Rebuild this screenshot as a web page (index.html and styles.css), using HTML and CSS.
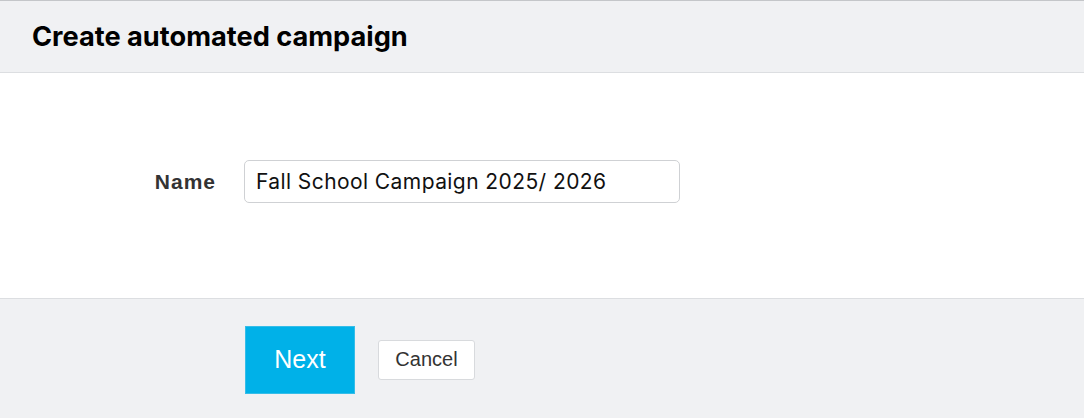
FILE: index.html
```html
<!DOCTYPE html>
<html>
<head>
<meta charset="utf-8">
<link rel="stylesheet" href="styles.css">
</head>
<body>
<div class="page">
  <header class="header">
    <h1 class="title">Create automated campaign</h1>
  </header>
  <main class="body">
    <div class="row">
      <label class="label" for="name">Name</label>
      <input class="input" id="name" type="text" value="Fall School Campaign 2025/ 2026">
    </div>
  </main>
  <footer class="footer">
    <button class="btn-next">Next</button>
    <button class="btn-cancel">Cancel</button>
  </footer>
</div>
</body>
</html>
```
FILE: styles.css
```css
* { box-sizing: border-box; }
html, body { margin: 0; padding: 0; }
body { width: 1084px; height: 418px; overflow: hidden; background: #f0f1f3; }
.page { display: flex; flex-direction: column; height: 418px; border-top: 1px solid #c4c6c9; }
.header {
  height: 72px;
  background: #f0f1f3;
  border-bottom: 1px solid #dcdee1;
  display: flex;
  align-items: center;
  padding-left: 32px;
}
.title {
  margin: 0;
  font-family: Inter, "Noto Sans", sans-serif;
  font-weight: 700;
  font-size: 27.2px;
  color: #000;
  padding-bottom: 1px;
}
.body {
  height: 226px;
  background: #fff;
  border-bottom: 1px solid #dcdee1;
  display: flex;
  align-items: center;
  padding-bottom: 9px;
}
.row { display: flex; align-items: center; }
.label {
  width: 216px;
  text-align: right;
  font-family: "Liberation Sans", Arial, sans-serif;
  font-weight: 700;
  font-size: 21px;
  letter-spacing: 1px;
  color: #333;
  margin-right: 28px;
  padding-top: 1px;
}
.input {
  width: 436px;
  height: 43px;
  border: 1px solid #cfd1d4;
  border-radius: 5px;
  padding: 0 11px;
  font-family: Inter, "Noto Sans", sans-serif;
  font-size: 21px;
  letter-spacing: 0.42px;
  color: #111;
  background: #fff;
  outline: none;
}
.footer {
  flex: 1;
  background: #f0f1f3;
  display: flex;
  align-items: center;
  padding-left: 245px;
  padding-top: 2px;
}
.btn-next {
  width: 110px;
  height: 68px;
  background: #00b1e8;
  border: 1px solid #35bde8;
  color: #fff;
  font-family: "Liberation Sans", Arial, sans-serif;
  font-size: 25px;
  margin-right: 23px;
  padding: 0;
  cursor: pointer;
}
.btn-cancel {
  width: 97px;
  height: 40px;
  background: #fff;
  border: 1px solid #d8dadd;
  border-radius: 3px;
  color: #333;
  font-family: "Liberation Sans", Arial, sans-serif;
  font-size: 20px;
  padding: 0;
  cursor: pointer;
}
```
